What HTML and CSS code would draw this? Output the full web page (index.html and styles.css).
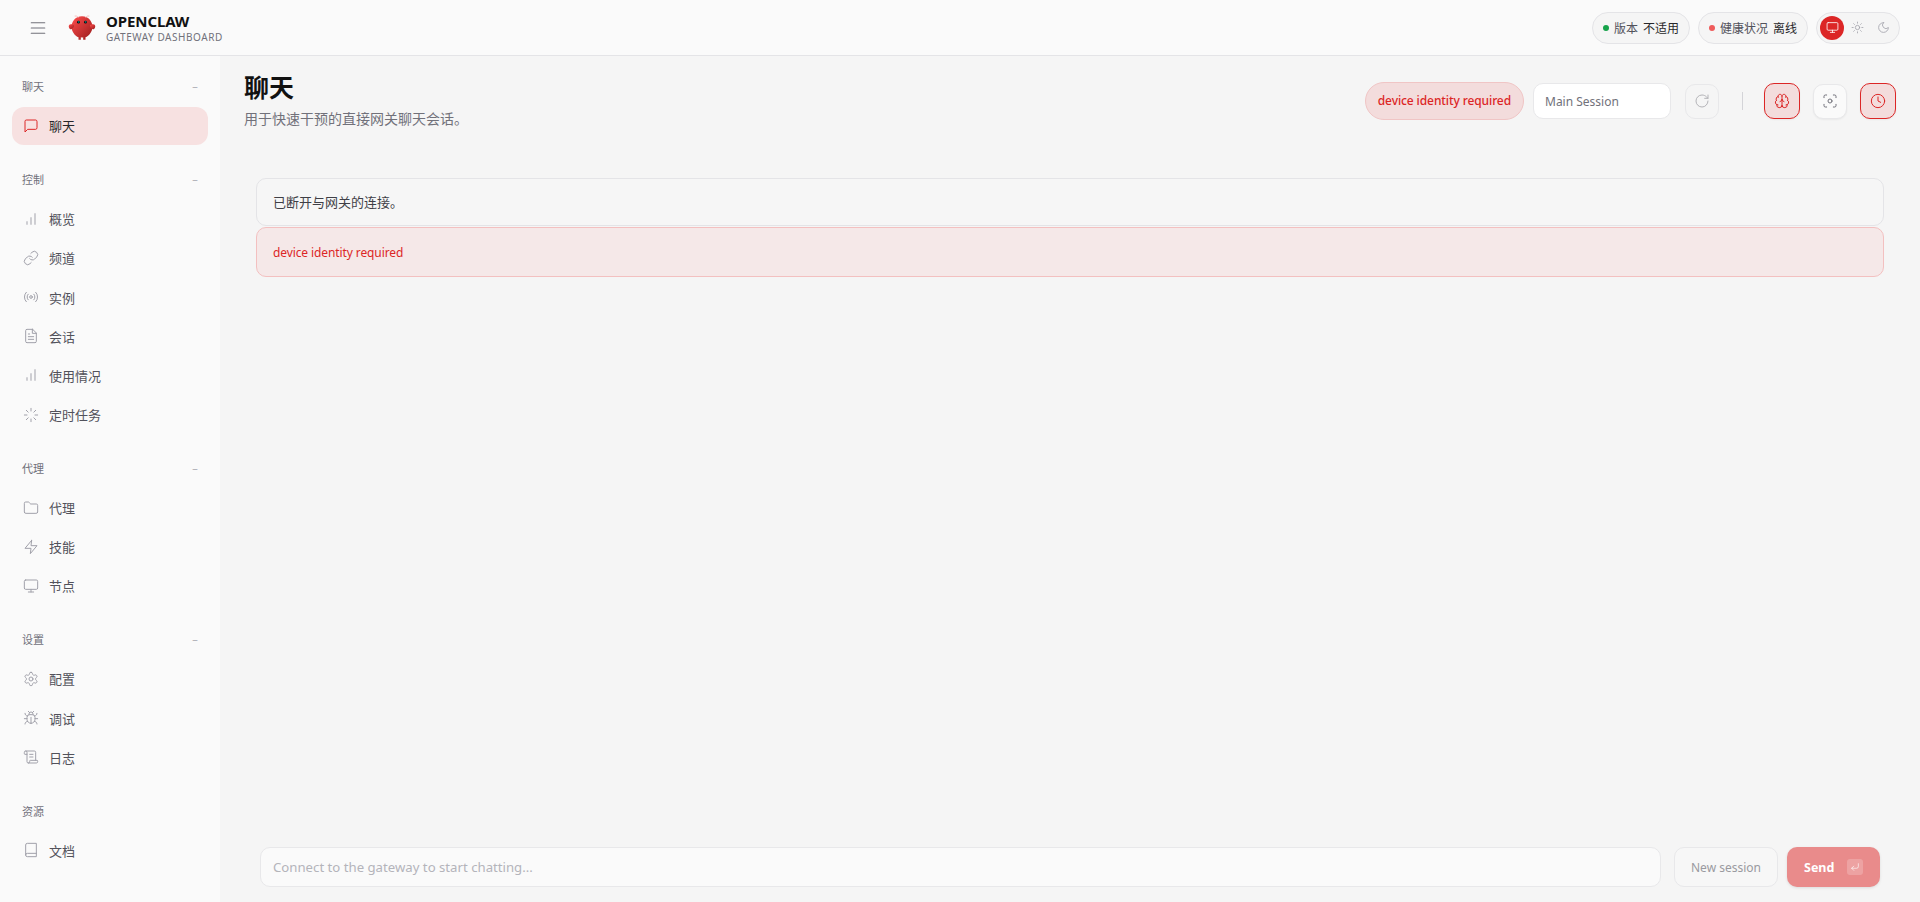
FILE: index.html
```html
<!DOCTYPE html>
<html lang="zh-CN">
<head>
    <meta charset="UTF-8">
    <meta name="viewport" content="width=device-width, initial-scale=1.0">
    <title>OpenClaw Gateway Dashboard</title>
    <link rel="stylesheet" href="styles.css">
</head>
<body>
<div class="app">

    <header class="topbar">
        <div class="brand">
            <button class="menu-btn" aria-label="menu">
                <svg class="icon" viewBox="0 0 24 24"><path d="M3 5h18M3 12h18M3 19h18"/></svg>
            </button>
            <svg class="logo" viewBox="0 0 120 120">
                <defs>
                    <linearGradient id="logoFill" x1="0" y1="0" x2="1" y2="1">
                        <stop offset="0" stop-color="#ff4d4d"/>
                        <stop offset="1" stop-color="#991b1b"/>
                    </linearGradient>
                </defs>
                <path fill="url(#logoFill)" d="M60 10C30 10 15 35 15 55c0 20 15 40 30 45v10h10v-10s5 2 10 0v10h10v-10c15-5 30-25 30-45 0-20-15-45-45-45z"/>
                <path fill="url(#logoFill)" d="M20 45C5 40 0 50 5 60s15 5 20-5c3-7 0-10-5-10z"/>
                <path fill="url(#logoFill)" d="M100 45c15-5 20 5 15 15s-15 5-20-5c-3-7 0-10 5-10z"/>
                <path class="logo-feeler" d="M45 15Q35 5 30 8M75 15q10-10 15-7"/>
                <circle cx="45" cy="35" r="6" fill="#050810"/>
                <circle cx="75" cy="35" r="6" fill="#050810"/>
                <circle cx="46" cy="34" r="2.5" fill="#00e5cc"/>
                <circle cx="76" cy="34" r="2.5" fill="#00e5cc"/>
            </svg>
            <div class="brand-text">
                <div class="brand-name">OPENCLAW</div>
                <div class="brand-sub">GATEWAY DASHBOARD</div>
            </div>
        </div>
        <div class="status">
            <div class="chip"><span class="dot dot-ok"></span><span class="chip-label">版本</span><span class="chip-value">不适用</span></div>
            <div class="chip"><span class="dot dot-bad"></span><span class="chip-label">健康状况</span><span class="chip-value">离线</span></div>
            <div class="theme">
                <span class="theme-btn active">
                    <svg class="icon" viewBox="0 0 24 24"><rect x="2" y="3" width="20" height="14" rx="2"/><path d="M8 21h8M12 17v4"/></svg>
                </span>
                <span class="theme-btn">
                    <svg class="icon" viewBox="0 0 24 24"><circle cx="12" cy="12" r="4"/><path d="M12 2v2M12 20v2M4.93 4.93l1.41 1.41M17.66 17.66l1.41 1.41M2 12h2M20 12h2M6.34 17.66l-1.41 1.41M19.07 4.93l-1.41 1.41"/></svg>
                </span>
                <span class="theme-btn">
                    <svg class="icon" viewBox="0 0 24 24"><path d="M12 3a6 6 0 0 0 9 9 9 9 0 1 1-9-9Z"/></svg>
                </span>
            </div>
        </div>
    </header>

    <nav class="sidebar">
        <div class="group">
            <div class="group-label"><span>聊天</span><span class="minus">−</span></div>
            <a class="nav-item active">
                <svg class="icon" viewBox="0 0 24 24"><path d="M21 15a2 2 0 0 1-2 2H7l-4 4V5a2 2 0 0 1 2-2h14a2 2 0 0 1 2 2z"/></svg>
                聊天
            </a>
        </div>
        <div class="group">
            <div class="group-label"><span>控制</span><span class="minus">−</span></div>
            <a class="nav-item">
                <svg class="icon" viewBox="0 0 24 24"><path d="M12 20V10M18 20V4M6 20v-4"/></svg>
                概览
            </a>
            <a class="nav-item">
                <svg class="icon" viewBox="0 0 24 24"><path d="M10 13a5 5 0 0 0 7.54.54l3-3a5 5 0 0 0-7.07-7.07l-1.72 1.71"/><path d="M14 11a5 5 0 0 0-7.54-.54l-3 3a5 5 0 0 0 7.07 7.07l1.71-1.71"/></svg>
                频道
            </a>
            <a class="nav-item">
                <svg class="icon" viewBox="0 0 24 24"><circle cx="12" cy="12" r="2"/><path d="M4.93 19.07a10 10 0 0 1 0-14.14M7.76 16.24a6 6 0 0 1 0-8.49M16.24 7.76a6 6 0 0 1 0 8.49M19.07 4.93a10 10 0 0 1 0 14.14"/></svg>
                实例
            </a>
            <a class="nav-item">
                <svg class="icon" viewBox="0 0 24 24"><path d="M14.5 2H6a2 2 0 0 0-2 2v16a2 2 0 0 0 2 2h12a2 2 0 0 0 2-2V7.5L14.5 2z"/><path d="M14 2v6h6M16 13H8M16 17H8M10 9H8"/></svg>
                会话
            </a>
            <a class="nav-item">
                <svg class="icon" viewBox="0 0 24 24"><path d="M12 20V10M18 20V4M6 20v-4"/></svg>
                使用情况
            </a>
            <a class="nav-item">
                <svg class="icon" viewBox="0 0 24 24"><path d="M12 2v4M12 18v4M4.93 4.93l2.83 2.83M16.24 16.24l2.83 2.83M2 12h4M18 12h4M4.93 19.07l2.83-2.83M16.24 7.76l2.83-2.83"/></svg>
                定时任务
            </a>
        </div>
        <div class="group">
            <div class="group-label"><span>代理</span><span class="minus">−</span></div>
            <a class="nav-item">
                <svg class="icon" viewBox="0 0 24 24"><path d="M20 20a2 2 0 0 0 2-2V8a2 2 0 0 0-2-2h-7.9a2 2 0 0 1-1.69-.9L9.6 3.9A2 2 0 0 0 7.93 3H4a2 2 0 0 0-2 2v13a2 2 0 0 0 2 2Z"/></svg>
                代理
            </a>
            <a class="nav-item">
                <svg class="icon" viewBox="0 0 24 24"><path d="M13 2 3 14h9l-1 8 10-12h-9l1-8z"/></svg>
                技能
            </a>
            <a class="nav-item">
                <svg class="icon" viewBox="0 0 24 24"><rect x="2" y="3" width="20" height="14" rx="2"/><path d="M8 21h8M12 17v4"/></svg>
                节点
            </a>
        </div>
        <div class="group">
            <div class="group-label"><span>设置</span><span class="minus">−</span></div>
            <a class="nav-item">
                <svg class="icon" viewBox="0 0 24 24"><path d="M12.22 2h-.44a2 2 0 0 0-2 2v.18a2 2 0 0 1-1 1.73l-.43.25a2 2 0 0 1-2 0l-.15-.08a2 2 0 0 0-2.73.73l-.22.38a2 2 0 0 0 .73 2.73l.15.1a2 2 0 0 1 1 1.72v.51a2 2 0 0 1-1 1.74l-.15.09a2 2 0 0 0-.73 2.73l.22.38a2 2 0 0 0 2.73.73l.15-.08a2 2 0 0 1 2 0l.43.25a2 2 0 0 1 1 1.73V20a2 2 0 0 0 2 2h.44a2 2 0 0 0 2-2v-.18a2 2 0 0 1 1-1.73l.43-.25a2 2 0 0 1 2 0l.15.08a2 2 0 0 0 2.73-.73l.22-.39a2 2 0 0 0-.73-2.73l-.15-.08a2 2 0 0 1-1-1.74v-.5a2 2 0 0 1 1-1.74l.15-.09a2 2 0 0 0 .73-2.73l-.22-.38a2 2 0 0 0-2.73-.73l-.15.08a2 2 0 0 1-2 0l-.43-.25a2 2 0 0 1-1-1.73V4a2 2 0 0 0-2-2z"/><circle cx="12" cy="12" r="3"/></svg>
                配置
            </a>
            <a class="nav-item">
                <svg class="icon" viewBox="0 0 24 24"><path d="m8 2 1.88 1.88M14.12 3.88 16 2M9 7.13v-1a3.003 3.003 0 1 1 6 0v1"/><path d="M12 20c-3.3 0-6-2.7-6-6v-3a4 4 0 0 1 4-4h4a4 4 0 0 1 4 4v3c0 3.3-2.7 6-6 6M12 20v-9"/><path d="M6.53 9C4.6 8.8 3 7.1 3 5M6 13H2M3 21c0-2.1 1.7-3.9 3.8-4M20.97 5c0 2.1-1.6 3.8-3.5 4M22 13h-4M17.2 17c2.1.1 3.8 1.9 3.8 4"/></svg>
                调试
            </a>
            <a class="nav-item">
                <svg class="icon" viewBox="0 0 24 24"><path d="M15 12h-5M15 8h-5M19 17V5a2 2 0 0 0-2-2H4"/><path d="M8 21h12a2 2 0 0 0 2-2v-1a1 1 0 0 0-1-1H11a1 1 0 0 0-1 1v1a2 2 0 1 1-4 0V5a2 2 0 1 0-4 0v2a1 1 0 0 0 1 1h3"/></svg>
                日志
            </a>
        </div>
        <div class="group">
            <div class="group-label"><span>资源</span></div>
            <a class="nav-item">
                <svg class="icon" viewBox="0 0 24 24"><path d="M4 19.5v-15A2.5 2.5 0 0 1 6.5 2H20v20H6.5a2.5 2.5 0 0 1 0-5H20"/></svg>
                文档
            </a>
        </div>
    </nav>

    <main class="content">
        <div class="page-head">
            <div>
                <h1>聊天</h1>
                <p class="page-sub">用于快速干预的直接网关聊天会话。</p>
            </div>
            <div class="tools">
                <div class="error-pill">device identity required</div>
                <div class="session-box">Main Session</div>
                <button class="tool-btn faded">
                    <svg class="icon" viewBox="0 0 24 24"><path d="M21 12a9 9 0 1 1-9-9c2.52 0 4.93 1 6.74 2.74L21 8"/><path d="M21 3v5h-5"/></svg>
                </button>
                <span class="divider"></span>
                <button class="tool-btn on">
                    <svg class="icon" viewBox="0 0 24 24"><path d="M12 18V5M15 13a4.17 4.17 0 0 1-3-4 4.17 4.17 0 0 1-3 4M17.598 6.5A3 3 0 1 0 12 5a3 3 0 1 0-5.598 1.5M17.997 5.125a4 4 0 0 1 2.526 5.77M18 18a4 4 0 0 0 2-7.464M19.967 17.483A4 4 0 1 1 12 18a4 4 0 1 1-7.967-.517M6 18a4 4 0 0 1-2-7.464M6.003 5.125a4 4 0 0 0-2.526 5.77"/></svg>
                </button>
                <button class="tool-btn">
                    <svg class="icon" viewBox="0 0 24 24"><path d="M3 7V5a2 2 0 0 1 2-2h2M17 3h2a2 2 0 0 1 2 2v2M21 17v2a2 2 0 0 1-2 2h-2M7 21H5a2 2 0 0 1-2-2v-2"/><circle cx="12" cy="12" r="3"/></svg>
                </button>
                <button class="tool-btn on">
                    <svg class="icon" viewBox="0 0 24 24"><circle cx="12" cy="12" r="10"/><path d="M12 6v6l4 2"/></svg>
                </button>
            </div>
        </div>

        <div class="thread">
            <div class="notice">已断开与网关的连接。</div>
            <div class="notice notice-error">device identity required</div>
        </div>

        <div class="composer">
            <div class="composer-input">Connect to the gateway to start chatting...</div>
            <button class="new-session">New session</button>
            <button class="send">
                Send
                <span class="send-key">
                    <svg class="icon" viewBox="0 0 24 24"><path d="m9 10-5 5 5 5"/><path d="M20 4v7a4 4 0 0 1-4 4H4"/></svg>
                </span>
            </button>
        </div>
    </main>

</div>
</body>
</html>
```

FILE: styles.css
```css
* { box-sizing: border-box; }
html, body { height: 100%; }
body { margin: 0; overflow: hidden; background-color: #f5f5f5; color: #27272a; font-family: "Noto Sans", "Noto Sans CJK SC", sans-serif; }
button { font-family: inherit; padding: 0; cursor: pointer; }

.app { display: grid; grid-template-columns: 220px 1fr; grid-template-rows: 56px 1fr; height: 902px; }
.icon { width: 16px; height: 16px; fill: none; stroke: currentColor; stroke-width: 1.5; stroke-linecap: round; stroke-linejoin: round; flex: none; }

/* top bar */
.topbar { grid-column: 1 / 3; display: flex; align-items: center; justify-content: space-between; padding: 0 20px 0 28px; background-color: #fafafa; border-bottom: 1px solid #e4e4e7; }
.brand { display: flex; align-items: center; }
.menu-btn { width: 20px; height: 20px; display: flex; align-items: center; justify-content: center; margin-right: 20px; border: none; background: none; color: #71717a; }
.menu-btn .icon { width: 18px; height: 18px; }
.logo { width: 28px; height: 28px; margin-right: 10px; }
.logo-feeler { fill: none; stroke: #f4a3a3; stroke-width: 3; stroke-linecap: round; }
.brand-name { font-size: 15px; font-weight: 700; line-height: 18px; color: #111; letter-spacing: -0.1px; }
.brand-sub { font-size: 10px; line-height: 14px; color: #71717a; letter-spacing: 0.55px; }

.status { display: flex; align-items: center; gap: 8px; }
.chip { display: flex; align-items: center; height: 32px; padding: 0 10px; border: 1px solid #e4e4e7; border-radius: 16px; background-color: #f5f5f5; font-size: 12px; }
.dot { width: 6px; height: 6px; border-radius: 50%; margin-right: 5px; }
.dot-ok { background-color: #16a34a; }
.dot-bad { background-color: #ef5b5b; }
.chip-label { color: #52525b; margin-right: 5px; }
.chip-value { color: #27272a; }
.theme { display: flex; align-items: center; height: 32px; padding: 0 3px; border: 1px solid #e4e4e7; border-radius: 16px; background-color: #f5f5f5; }
.theme-btn { width: 26px; height: 24px; display: flex; align-items: center; justify-content: center; color: #a1a1aa; }
.theme-btn .icon { width: 13px; height: 13px; }
.theme-btn.active { width: 24px; border-radius: 50%; background-color: #dc2626; color: #fff; }

/* sidebar */
.sidebar { display: flex; flex-direction: column; gap: 26.3px; padding: 22px 12px 0; background-color: #fafafa; }
.group { display: flex; flex-direction: column; gap: 1.2px; }
.group-label { display: flex; justify-content: space-between; height: 18px; line-height: 18px; padding: 0 10px; margin-bottom: 9.5px; font-size: 11px; color: #71717a; }
.minus { color: #a1a1aa; font-size: 10px; }
.nav-item { display: flex; align-items: center; height: 38px; padding: 0 11px; gap: 10px; border-radius: 12px; font-size: 13px; color: #52525b; }
.nav-item .icon { color: #a1a1aa; }
.nav-item.active { background-color: #f7e1e1; color: #27272a; }
.nav-item.active .icon { color: #dc2626; }

/* main */
.content { display: flex; flex-direction: column; min-height: 0; padding: 0 24px 0 24px; }
.page-head { display: flex; justify-content: space-between; align-items: flex-start; padding-top: 14px; }
h1 { margin: 0; font-size: 25px; line-height: 34px; font-weight: 700; color: #111; }
.page-sub { margin: 5px 0 0; font-size: 14px; line-height: 20px; color: #71717a; }

.tools { display: flex; align-items: center; gap: 8px; padding-top: 12px; }
.error-pill { height: 38px; line-height: 36px; padding: 0 12px; margin-right: 1px; border: 1px solid #f0c5c5; border-radius: 19px; background-color: #f3dcdc; color: #dc2626; font-size: 12px; font-weight: 500; letter-spacing: -0.1px; }
.session-box { width: 138px; height: 36px; line-height: 35px; padding: 0 11px; margin-right: 1px; border: 1px solid #e8e8ea; border-radius: 10px; background-color: #fff; color: #71717a; font-size: 12px; }
.tool-btn { width: 34px; height: 35px; display: flex; align-items: center; justify-content: center; margin-left: 5px; border: 1px solid #e8e8ea; border-radius: 10px; background-color: #fafafa; color: #71717a; box-shadow: 0 1px 2px rgba(0, 0, 0, 0.05); }
.tool-btn.faded { background-color: #f5f5f5; color: #b4b4b8; box-shadow: none; }
.tool-btn.on { width: 36px; height: 36px; border-color: #dc2626; background-color: #f3dcdc; color: #dc2626; }
.divider { width: 1px; height: 18px; margin: 0 8px 0 15px; background-color: #d4d4d8; }

.thread { flex: 1; display: flex; flex-direction: column; gap: 1px; padding: 49px 12px 0 12px; }
.notice { height: 48px; line-height: 46px; padding: 0 16px; border: 1px solid #e4e4e7; border-radius: 10px; background-color: #f6f6f6; font-size: 13px; color: #3f3f46; }
.notice-error { height: 50px; line-height: 48px; padding-top: 1px; border-color: #f3c0c0; background-color: #f5e8e8; color: #dc2626; font-size: 12px; letter-spacing: -0.1px; }

.composer { display: flex; align-items: stretch; height: 40px; margin: 0 16px 15px; gap: 9px; }
.composer-input { flex: 1; line-height: 38px; padding: 0 12px; margin-right: 4px; border: 1px solid #e8e8ea; border-radius: 10px; background-color: #fafafa; color: #b4b4ba; font-size: 13.2px; }
.new-session { width: 104px; border: 1px solid #e8e8ea; border-radius: 10px; background-color: #f7f7f7; color: #9a9aa0; font-size: 12px; }
.send { display: flex; align-items: center; justify-content: space-between; width: 93px; padding: 0 17px 0 17px; border: none; border-radius: 10px; background-color: #e98b8b; color: #fff; font-size: 12.5px; font-weight: 700; box-shadow: 0 1px 3px rgba(0, 0, 0, 0.1); }
.send-key { width: 16px; height: 16px; display: flex; align-items: center; justify-content: center; border-radius: 3px; background-color: rgba(255, 255, 255, 0.2); }
.send-key .icon { width: 10px; height: 10px; }
```
